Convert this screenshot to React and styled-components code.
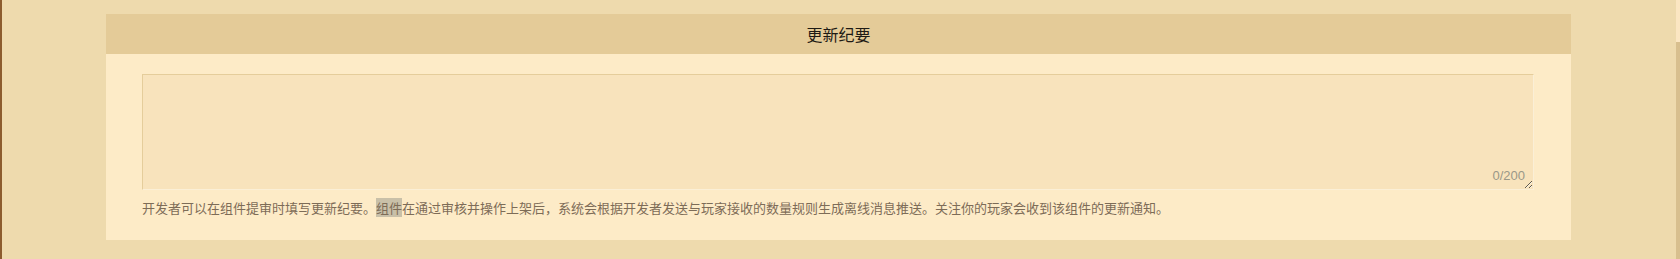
import React from "react";
import styled, { createGlobalStyle } from "styled-components";

const GlobalStyle = createGlobalStyle`
  html, body {
    margin: 0;
    padding: 0;
    background: #eedaad;
  }
  body {
    font-family: "Liberation Sans", "Noto Sans CJK SC", sans-serif;
  }
`;

const Page = styled.div`
  display: flex;
  height: 259px;
  background: #eedaad;
  border-left: 2px solid #8c5c2e;
  box-sizing: border-box;
`;

const Main = styled.div`
  flex: 1;
  padding: 14px 105px 0 104px;
`;

const ScrollBar = styled.div`
  width: 4px;
  display: flex;
  flex-direction: column;
  background: #d8bf8e;
`;

const ScrollTrack = styled.div`
  height: 42px;
  background: #fbe6c2;
`;

const Panel = styled.section`
  background: #fdebc7;
`;

const Header = styled.div`
  height: 40px;
  background: #e4cb98;
  display: flex;
  align-items: center;
  justify-content: center;
  font-size: 16px;
  color: #1e1a14;
  font-family: "Noto Sans CJK SC", sans-serif;
`;

const Body = styled.div`
  padding: 20px 37px 22px 36px;
`;

const Field = styled.div`
  position: relative;
  height: 116px;
`;

const Notes = styled.textarea`
  display: block;
  width: 100%;
  height: 100%;
  box-sizing: border-box;
  margin: 0;
  padding: 8px 10px;
  background: #f8e3bc;
  border: 1px solid #fbefd6;
  border-top-color: #e5cd9b;
  border-left-color: #e5cd9b;
  outline: none;
  font-size: 13px;
  color: #5a4a36;
  font-family: "Liberation Sans", "Noto Sans CJK SC", sans-serif;
`;

const Counter = styled.span`
  position: absolute;
  right: 9px;
  bottom: 7px;
  font-size: 13px;
  line-height: 15px;
  color: #9a9888;
  pointer-events: none;
`;

const Hint = styled.p`
  margin: 8px 0 0;
  font-size: 13px;
  line-height: 20px;
  color: #7d6c57;
  font-family: "Noto Sans CJK SC", sans-serif;
`;

const Selected = styled.span`
  background: #c9c0a8;
`;

export default function App() {
  return (
    <>
      <GlobalStyle />
      <Page>
        <Main>
          <Panel>
            <Header>更新纪要</Header>
            <Body>
              <Field>
                <Notes maxLength={200} />
                <Counter>0/200</Counter>
              </Field>
              <Hint>
                开发者可以在组件提审时填写更新纪要。<Selected>组件</Selected>
                在通过审核并操作上架后，系统会根据开发者发送与玩家接收的数量规则生成离线消息推送。关注你的玩家会收到该组件的更新通知。
              </Hint>
            </Body>
          </Panel>
        </Main>
        <ScrollBar>
          <ScrollTrack />
        </ScrollBar>
      </Page>
    </>
  );
}
